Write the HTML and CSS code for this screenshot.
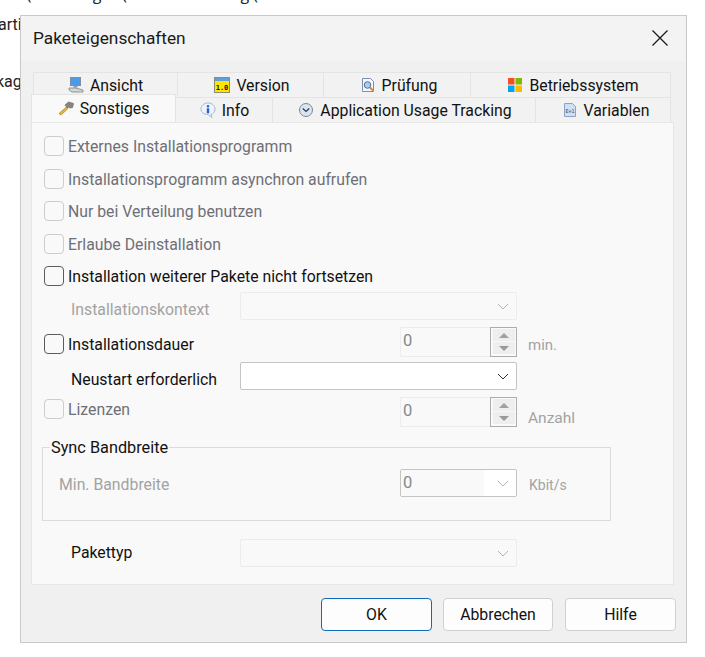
FILE: index.html
```html
<!DOCTYPE html>
<html lang="de">
<head>
<meta charset="utf-8">
<title>Paketeigenschaften</title>
<link rel="stylesheet" href="styles.css">
</head>
<body>
<div class="backdrop">
  <div class="bg-line bg-top">.12 (307ackages (Disk Partitioning (5.20</div>
  <div class="bg-line bg-mid">arti</div>
  <div class="bg-line bg-low">kag</div>
</div>
<section class="dialog">
  <header class="titlebar">
    <h1 class="title">Paketeigenschaften</h1>
    <svg class="close" viewBox="0 0 16 16" width="16" height="16"><path d="M0.5 0.5L15.5 15.5M15.5 0.5L0.5 15.5" stroke="#1a1a1a" stroke-width="1.3" fill="none"/></svg>
  </header>
  <div class="tabs">
    <div class="tabrow tabrow-back">
      <div class="tab t-ansicht">
        <svg class="ico" viewBox="0 0 16 16"><rect x="2.500" y="0.500" width="10" height="8" fill="#4a9be8" stroke="#7d8fa6"/><rect x="5.500" y="8.500" width="4" height="2" fill="#8f959c"/><path d="M1 11h7l7 2v2H4L1 13z" fill="#d4d6d8" stroke="#7c8086" stroke-width=".8"/></svg>
        <span>Ansicht</span>
      </div>
      <div class="tab t-version">
        <svg class="ico" viewBox="0 0 16 16"><rect x="0.500" y="0.500" width="15" height="15" fill="#ffe600" stroke="#8c8c70"/><rect x="1" y="1" width="14" height="3" fill="#5fa0dc"/><text x="8" y="12.500" text-anchor="middle" class="ico-text">1.0</text></svg>
        <span>Version</span>
      </div>
      <div class="tab t-pruefung">
        <svg class="ico" viewBox="0 0 16 16"><path d="M2.500 1.500h8l3 3v10h-11z" fill="#f4f7fb" stroke="#7d8fb0"/><circle cx="7.500" cy="8" r="3.300" fill="#a9cdf0" stroke="#54708f"/><path d="M10 10.500l3 3" stroke="#e2853c" stroke-width="2"/></svg>
        <span>Prüfung</span>
      </div>
      <div class="tab t-os">
        <svg class="ico" viewBox="0 0 16 16"><rect x="1" y="1" width="6.500" height="6.500" fill="#f25022"/><rect x="8.500" y="1" width="6.500" height="6.500" fill="#7fba00"/><rect x="1" y="8.500" width="6.500" height="6.500" fill="#00a4ef"/><rect x="8.500" y="8.500" width="6.500" height="6.500" fill="#ffb900"/></svg>
        <span>Betriebssystem</span>
      </div>
    </div>
    <div class="tabrow tabrow-front">
      <div class="tab tab-active t-sonstiges">
        <svg class="ico" viewBox="0 0 16 16"><path d="M1 13.500l7.500-6.500 1.500 1.500L3 15z" fill="#e8b93a" stroke="#a07a20" stroke-width=".7"/><path d="M7 5l3.500-3 5 1.500-1 4-2.500.5-1.500-1-1 1z" fill="#8a847c" stroke="#625d56" stroke-width=".6"/></svg>
        <span>Sonstiges</span>
      </div>
      <div class="tab t-info">
        <svg class="ico" viewBox="0 0 16 16"><path d="M8 1c4 0 7 2.500 7 6 0 3-2 5-4 5.500l1 3-4-3C4 12.500 1 10.500 1 7c0-3.500 3-6 7-6z" fill="#eef3fb" stroke="#aab6cc"/><circle cx="8" cy="4.300" r="1.200" fill="#2a5fc4"/><rect x="6.800" y="6.300" width="2.400" height="5" fill="#2a5fc4"/></svg>
        <span>Info</span>
      </div>
      <div class="tab t-usage">
        <svg class="ico" viewBox="0 0 16 16"><circle cx="8" cy="8" r="6.500" fill="#d9e6f2" stroke="#7b8794"/><path d="M4.800 6.500L8 9.500l3.200-3" fill="none" stroke="#24384f" stroke-width="1.200"/></svg>
        <span>Application Usage Tracking</span>
      </div>
      <div class="tab t-vars">
        <svg class="ico" viewBox="0 0 16 16"><path d="M2.500 1.500h8l3 3v10h-11z" fill="#cfe0f6" stroke="#8ba2c6"/><text x="8" y="11" text-anchor="middle" class="ico-text ico-text-small">E=1</text></svg>
        <span>Variablen</span>
      </div>
    </div>
  </div>
  <div class="panel">
    <label class="row check-row is-off"><span class="box"></span><span>Externes Installationsprogramm</span></label>
    <label class="row mt13 check-row is-off"><span class="box"></span><span>Installationsprogramm asynchron aufrufen</span></label>
    <label class="row mt12 check-row is-off"><span class="box"></span><span>Nur bei Verteilung benutzen</span></label>
    <label class="row mt13 check-row is-off"><span class="box"></span><span>Erlaube Deinstallation</span></label>
    <label class="row mt12 check-row"><span class="box box-on"></span><span>Installation weiterer Pakete nicht fortsetzen</span></label>

    <div class="row mt6 field-row">
      <span class="lead lead-off">Installationskontext</span>
      <div class="combo combo-off"><svg class="chev" viewBox="0 0 12 7"><path d="M1 1l5 5 5-5" /></svg></div>
    </div>

    <div class="row mt7 spin-row">
      <label class="check-row check-wide check-down"><span class="box box-on"></span><span>Installationsdauer</span></label>
      <div class="spin">
        <span class="spin-val">0</span>
        <div class="spin-btns"><span class="spin-btn"><i class="arrow up"></i></span><span class="spin-btn"><i class="arrow down"></i></span></div>
      </div>
      <span class="unit unit-min">min.</span>
    </div>

    <div class="row mt5 field-row">
      <span class="lead lead-low">Neustart erforderlich</span>
      <div class="combo combo-on"><svg class="chev chev-on" viewBox="0 0 12 7"><path d="M1 1l5 5 5-5" /></svg></div>
    </div>

    <div class="row mt7 spin-row">
      <label class="check-row check-wide is-off check-up"><span class="box"></span><span>Lizenzen</span></label>
      <div class="spin">
        <span class="spin-val">0</span>
        <div class="spin-btns"><span class="spin-btn"><i class="arrow up"></i></span><span class="spin-btn"><i class="arrow down"></i></span></div>
      </div>
      <span class="unit unit-anz">Anzahl</span>
    </div>

    <fieldset class="group">
      <legend class="group-title">Sync Bandbreite</legend>
      <div class="group-row">
        <span class="group-lead">Min. Bandbreite</span>
        <div class="combo combo-num"><span class="num-val">0</span><svg class="chev" viewBox="0 0 12 7"><path d="M1 1l5 5 5-5" /></svg></div>
        <span class="unit unit-kbit">Kbit/s</span>
      </div>
    </fieldset>

    <div class="row mt18 field-row">
      <span class="lead lead-high">Pakettyp</span>
      <div class="combo combo-off"><svg class="chev" viewBox="0 0 12 7"><path d="M1 1l5 5 5-5" /></svg></div>
    </div>
  </div>
  <footer class="actions">
    <button class="btn btn-default">OK</button>
    <button class="btn">Abbrechen</button>
    <button class="btn">Hilfe</button>
  </footer>
</section>
</body>
</html>
```
FILE: styles.css
```css
* { box-sizing: border-box; }
html, body { margin: 0; height: 100%; }
body {
  position: relative;
  background: #fff;
  overflow: hidden;
  font-family: Roboto, "Open Sans", "Liberation Sans", sans-serif;
  font-size: 15.800px;
  color: #111;
}
.bg-line { position: absolute; font-size: 16px; line-height: 20px; color: #222; white-space: nowrap; }
.bg-top { left: 0; top: -16px; font-family: "Open Sans", sans-serif; }
.bg-mid { left: -2px; top: 15px; }
.bg-low { left: -4px; top: 72px; }

.dialog {
  position: absolute;
  left: 20px;
  top: 15px;
  width: 667px;
  height: 628px;
  background: #f0f0f0;
  border: 1px solid #c9c9c9;
  display: flex;
  flex-direction: column;
}
.titlebar {
  height: 45px;
  background: #f3f3f3;
  display: flex;
  align-items: center;
  justify-content: space-between;
  padding: 0 18px 2px 12px;
  flex: none;
}
.title { margin: 0; font-size: 17.300px; font-weight: 400; color: #1a1a1a; }
.close { display: block; }

.tabs { padding-top: 11px; padding-left: 12px; flex: none; position: relative; height: 61px; }
.tabrow { display: flex; height: 25px; }
.tab {
  display: flex;
  align-items: center;
  justify-content: center;
  gap: 6px;
  height: 25px;
  background: #f2f2f2;
  border: 1px solid #e4e4e4;
  border-bottom: 0;
  border-left: 0;
  white-space: nowrap;
  color: #111;
}
.tabrow .tab:first-child { border-left: 1px solid #e4e4e4; }
.tabrow-front { margin-left: -2px; }
.tab-active {
  background: #f9f9f9;
  height: 28px;
  margin-top: -3px;
  margin-bottom: -1px;
  position: relative;
  z-index: 1;
  padding-bottom: 1px;
}
.ico { width: 16px; height: 16px; flex: none; display: block; }
.ico-text { font-family: "DejaVu Sans Mono", monospace; font-size: 7px; font-weight: 700; fill: #111; }
.ico-text-small { font-size: 5px; font-weight: 400; fill: #444; }
.t-ansicht { width: 145px; }
.t-version { width: 146px; padding-left: 3px; }
.t-pruefung { width: 147px; padding-left: 3px; }
.t-os { width: 200px; padding-left: 5px; }
.t-sonstiges { width: 145px; }
.t-info { width: 97px; padding-left: 1px; }
.t-usage { width: 263px; padding-left: 2px; }
.t-vars { width: 135px; padding-left: 5px; }

.panel {
  margin-left: 10px;
  width: 643px;
  height: 463px;
  background: #f9f9f9;
  border: 1px solid #e6e6e6;
  padding: 13px 0 0 12px;
  flex: none;
}
.row { display: flex; align-items: center; }
.mt5 { margin-top: 5px; }
.mt6 { margin-top: 6px; }
.mt7 { margin-top: 7px; }
.mt12 { margin-top: 12px; }
.mt13 { margin-top: 13px; }
.mt18 { margin-top: 18px; }

.check-row { display: flex; align-items: center; gap: 4px; height: 20px; color: #111; }
.is-off { color: #6f6f76; }
.box {
  width: 20px;
  height: 20px;
  flex: none;
  border: 1px solid #cdcdcd;
  border-radius: 4px;
  background: #f9f9f9;
}
.box-on { border-color: #5c5c5c; }
.check-wide { width: 356px; flex: none; }
.check-down { margin-top: 4px; }
.check-up { margin-bottom: 6px; }

.field-row { height: 28px; }
.lead { width: 196px; padding-left: 27px; flex: none; }
.lead-off { color: #a3a3a3; padding-top: 6px; }
.lead-low { padding-top: 6px; }
.lead-high { padding-bottom: 2px; }
.combo {
  width: 277px;
  height: 28px;
  flex: none;
  border: 1px solid #ececec;
  border-radius: 2px;
  display: flex;
  align-items: center;
  justify-content: flex-end;
  padding-right: 7px;
  background: #f9f9f9;
}
.combo-on { background: #fff; border-color: #c4c4c4; }
.chev { width: 12px; height: 7px; display: block; }
.chev path { fill: none; stroke: #b5b5b5; stroke-width: 1; }
.chev-on path { stroke: #333; }

.spin-row { height: 30px; }
.spin {
  width: 117px;
  height: 30px;
  display: flex;
  flex: none;
  justify-content: space-between;
  border: 1px solid #ececec;
  border-right: 0;
  border-radius: 2px 0 0 2px;
}
.spin-val, .num-val { color: #84898f; padding-left: 2px; }
.spin-val { line-height: 25px; font-size: 16.500px; }
.spin-btns {
  width: 27px;
  height: 30px;
  margin: -1px 0;
  border: 1px solid #adadad;
  background: #f9f9f9;
  padding: 1px 1px 2px 2px;
  display: flex;
  flex-direction: column;
  gap: 1px;
  flex: none;
}
.spin-btn { flex: 1; background: #eeeeee; display: flex; align-items: center; justify-content: center; }
.arrow { width: 0; height: 0; border-left: 5px solid transparent; border-right: 5px solid transparent; display: block; }
.arrow.up { border-bottom: 5px solid #a0a0a0; }
.arrow.down { border-top: 5px solid #999; }
.unit { color: #a3a3a3; margin-left: 11px; font-size: 15px; }
.unit-min { padding-top: 6px; }
.unit-anz { padding-top: 12px; font-size: 15.500px; }

.group {
  margin: 20px 0 0 -2px;
  padding: 0;
  width: 569px;
  height: 74px;
  border: 1px solid #dcdcdc;
  position: relative;
  min-width: 0;
}
.group-title {
  position: absolute;
  left: 7px;
  top: -10px;
  padding: 0 1px;
  line-height: 20px;
  background: #f9f9f9;
  color: #111;
  font-size: 16.300px;
}
.group-row { display: flex; align-items: center; height: 28px; margin-top: 21px; padding-left: 16px; }
.group-lead { width: 341px; flex: none; color: #a3a3a3; padding-top: 3px; }
.combo-num { width: 117px; background: #fff; border-color: #c4c4c4; justify-content: space-between; padding-left: 2px; }
.combo-num .num-val { background: #f9f9f9; width: 83px; margin-left: -2px; padding-left: 2px; height: 26px; line-height: 25px; font-size: 16.500px; }
.unit-kbit { padding-top: 3px; margin-left: 12px; font-size: 14px; }

.actions { flex: 1; display: flex; justify-content: flex-end; gap: 11px; padding: 13px 10px 0 0; align-items: flex-start; }
.actions .btn:last-child { margin-left: 1px; }
.btn {
  width: 111px;
  height: 33px;
  background: #fdfdfd;
  border: 1px solid #d0d0d0;
  border-radius: 4px;
  font: inherit;
  color: #111;
  padding: 0;
}
.btn:nth-child(2) { width: 110px; }
.btn-default { border-color: #0f6cbd; }
```
